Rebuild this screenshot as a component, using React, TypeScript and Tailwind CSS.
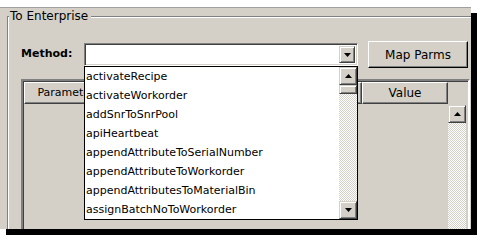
const METHODS = [
  "activateRecipe",
  "activateWorkorder",
  "addSnrToSnrPool",
  "apiHeartbeat",
  "appendAttributeToSerialNumber",
  "appendAttributeToWorkorder",
  "appendAttributesToMaterialBin",
  "assignBatchNoToWorkorder",
];

const font = { fontFamily: '"DejaVu Sans", Verdana, sans-serif' };

function Arrow({ up }: { up?: boolean }) {
  return (
    <svg width="7" height="4" viewBox="0 0 7 4" className="block">
      {up ? <path d="M3.5 0 L7 4 L0 4 Z" fill="#000" /> : <path d="M0 0 L7 0 L3.5 4 Z" fill="#000" />}
    </svg>
  );
}

// classic raised 3d button face
function ScrollButton({ up, className = "" }: { up?: boolean; className?: string }) {
  return (
    <div
      className={`flex items-center justify-center bg-[#d4d0c8] border border-t-[#d4d0c8] border-l-[#d4d0c8] border-r-[#404040] border-b-[#404040] shadow-[inset_1px_1px_0_#fff,inset_-1px_-1px_0_#808080] ${className}`}
    >
      <Arrow up={up} />
    </div>
  );
}

const checker = "bg-[repeating-conic-gradient(#d4d0c8_0_25%,#ffffff_0_50%)] bg-[length:2px_2px]";
const headerCell =
  "bg-[#d4d0c8] border border-t-white border-l-white border-r-[#404040] border-b-[#404040] shadow-[inset_-1px_-1px_0_#808080]";

export default function App() {
  return (
    <div className="w-[487px] h-[250px] bg-white pt-[7px] text-black text-[11px]" style={font}>
      <div className="relative w-[471px] h-[222px] bg-[#d4d0c8] border-t border-[#a0a0a0] shadow-[6px_6px_0_0_#000]">
        <div className="h-full overflow-hidden pt-[8px] pl-[7px]">
          {/* group box, cropped on the right and bottom */}
          <div className="relative w-[480px] h-[260px] border-t border-l border-[#808080] shadow-[inset_1px_1px_0_#fff] pt-[24px] pl-[13px]">
            <div className="absolute left-[1px] top-[-8px] bg-[#d4d0c8] pl-[1px] pr-[3px] leading-[15px] text-[12px]">
              To Enterprise
            </div>

            <div className="flex items-center h-[27px]">
              <div className="w-[63px] font-bold text-[11px]">Method:</div>
              <div className="relative w-[274px] h-[23px] bg-white border border-t-[#808080] border-l-[#808080] border-r-white border-b-white shadow-[inset_1px_1px_0_#404040,inset_-1px_-1px_0_#d4d0c8] p-[2px] flex justify-end">
                <ScrollButton className="w-[16px] h-[17px]" />
                <div className="absolute left-[-1px] top-[22px] w-[274px] border border-black bg-white flex z-10">
                  <div className="flex-1">
                    {METHODS.map((m) => (
                      <div key={m} className="h-[19px] leading-[19px] pl-[1px] text-[11px] whitespace-nowrap">
                        {m}
                      </div>
                    ))}
                  </div>
                  <div className="w-[18px] flex flex-col">
                    <ScrollButton up className="w-[18px] h-[18px]" />
                    <div className="w-[18px] h-[9px] bg-[#d4d0c8] border border-t-[#d4d0c8] border-l-[#d4d0c8] border-r-[#404040] border-b-[#404040] shadow-[inset_1px_1px_0_#fff,inset_-1px_-1px_0_#808080]" />
                    <div className={`flex-1 ${checker}`} />
                    <ScrollButton className="w-[18px] h-[18px]" />
                  </div>
                </div>
              </div>
              <button className="ml-[10px] w-[100px] h-[27px] bg-[#d4d0c8] border border-t-white border-l-white border-r-black border-b-black shadow-[inset_-1px_-1px_0_#808080] text-[12px]">
                Map Parms
              </button>
            </div>

            {/* parameter table */}
            <div className="mt-[11px] w-[449px] h-[170px] border-2 border-t-[#808080] border-l-[#808080] border-r-white border-b-white shadow-[inset_1px_1px_0_#404040] flex flex-col pl-[1px] pt-[1px]">
              <div className="flex h-[22px]">
                <div className={`w-[84px] flex items-center justify-center ${headerCell}`}>Parameter</div>
                <div className={`w-[254px] ${headerCell}`} />
                <div className={`w-[86px] flex items-center justify-center text-[12px] ${headerCell}`}>Value</div>
                <div className="flex-1" />
              </div>
              <div className="flex flex-1 pt-[1px]">
                <div className="flex-1" />
                <div className="w-[18px] mr-[2px] flex flex-col">
                  <ScrollButton up className="w-[18px] h-[18px]" />
                  <div className={`flex-1 ${checker}`} />
                </div>
              </div>
            </div>
          </div>
        </div>
      </div>
    </div>
  );
}
